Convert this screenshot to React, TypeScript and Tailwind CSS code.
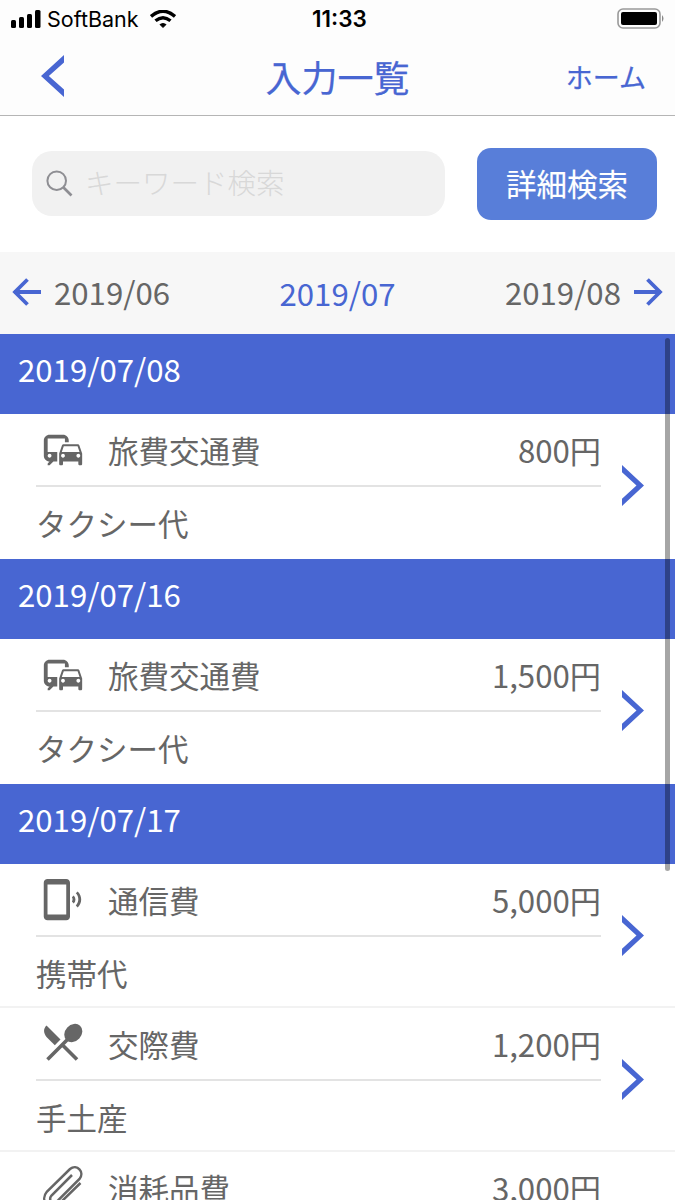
import React from 'react';
import { MdCommute, MdPhonelinkRing } from 'react-icons/md';

const jp = "font-['Noto_Sans_CJK_JP',sans-serif]";

function Paperclip() {
  return (
    <svg className="h-[45px] w-[45px]" viewBox="0 0 45 45" fill="none" stroke="currentColor" strokeWidth="2.5">
      <path d="M32 10L11.500 30.500C7.500 35.500 13 40 18 35.500L39.500 14C45 7 37 -1.500 30 4L7 26.500C-1 36 10 46 19 39L40.500 18" />
    </svg>
  );
}

function Cutlery() {
  return (
    <svg className="h-[45px] w-[45px]" viewBox="0 0 45 45" fill="currentColor">
      <path d="M6.500 4.500L20.500 18.500L14.800 24.200L6.500 16C3.500 12 3 8 6.500 4.500Z" />
      <ellipse cx="33.300" cy="12" rx="8.200" ry="9.900" transform="rotate(43 33.3 12)" />
      <path d="M29 17L7.500 38.500M21.500 23L37 38.500" stroke="currentColor" strokeWidth="3.600" />
    </svg>
  );
}

function Chevron({ className, flip }: { className: string; flip?: boolean }) {
  return (
    <svg className={className} viewBox="0 0 22 42" preserveAspectRatio="none" fill="#4866d2">
      <path d={flip ? 'M22 0V7.500L7.500 21L22 34.500V42L0 21Z' : 'M0 0V7.500L14.500 21L0 34.500V42L22 21Z'} />
    </svg>
  );
}

function Arrow({ right }: { right?: boolean }) {
  return (
    <svg className="h-[28px] w-[29px] shrink-0" viewBox="0 0 29 28" fill="none" stroke="#4866d2" strokeWidth="3.8">
      <path d={right ? 'M0 14H27M13.500 1.500L26 14L13.500 26.500' : 'M29 14H2M15.500 1.500L3 14L15.500 26.500'} />
    </svg>
  );
}

function DateHeader({ date }: { date: string }) {
  return (
    <div className="h-[80px] shrink-0 bg-[#4866d2] pl-[18px] pt-3 text-[31.2px] leading-[46px] text-white">
      {date}
    </div>
  );
}

type Item = { icon: React.ReactNode; name: string; price: string; memo: string };

function Row({ icon, name, price, memo, last }: Item & { last?: boolean }) {
  return (
    <div className={last ? 'flex h-[145px] shrink-0 pl-9' : 'flex h-[144px] shrink-0 border-b-2 border-[#f2f2f2] pl-9'}>
      <div className="w-[565px]">
        <div className="flex h-[73px] items-center border-b-2 border-[#e3e3e3]">
          <div className="ml-1 w-[45px]">{icon}</div>
          <div className="ml-[23px] flex-1 text-[30.5px] leading-[46px]">{name}</div>
          <div className="text-[31.2px] leading-[46px]">{price}</div>
        </div>
        <div className="pt-[13px] text-[30.5px] leading-[46px]">{memo}</div>
      </div>
      <Chevron className="ml-[21px] mt-[51px] h-[41px] w-[22px]" />
    </div>
  );
}

const commute = <MdCommute size={46} />;

export default function App() {
  return (
    <div className={`relative flex h-[1200px] w-[675px] flex-col overflow-hidden bg-white text-[#666] ${jp}`}>
      <div className="grid h-[37px] shrink-0 grid-cols-3 items-center bg-[#fdfdfd] px-[10px] font-['Inter',sans-serif] text-[22px] text-black">
        <div className="flex items-center">
          <svg className="h-[18px] w-[31px]" viewBox="0 0 31 18">
            <rect x="1" y="10" width="5" height="8" rx="1.500" />
            <rect x="9" y="7" width="5" height="11" rx="1.500" />
            <rect x="17" y="4" width="5" height="14" rx="1.500" />
            <rect x="25" y="0" width="5.500" height="18" rx="1.500" />
          </svg>
          <span className="ml-[6px] text-[21.5px] leading-[30px]">SoftBank</span>
          <svg className="ml-[11px] h-[18px] w-[26px]" viewBox="0 0 26 18">
            <path d="M10 14.500Q13 12.500 16 14.500L13 17.500Z" stroke="#000" strokeWidth="1" />
            <path d="M1 6.500Q13 -4 25 6.500M5.500 10.800Q13 4.500 20.500 10.800" fill="none" stroke="#000" strokeWidth="3.400" />
          </svg>
        </div>
        <div className="pl-1 text-center text-[22.5px] font-semibold">11:33</div>
        <div className="-mr-px flex justify-end">
          <svg className="h-[21px] w-[49px]" viewBox="0 0 49 21">
            <rect x="1" y="1" width="42" height="19" rx="5" fill="none" stroke="#999" strokeWidth="1.600" />
            <rect x="4" y="4" width="36" height="13" rx="2" />
            <path d="M45 7Q48 10.500 45 14Z" fill="#888" />
          </svg>
        </div>
      </div>
      <div className="grid h-[79px] shrink-0 grid-cols-3 items-center border-b border-[#b5b5b5] bg-[#fdfdfd] pb-px text-[#4866d2] [-webkit-text-stroke:0.25px]">
        <Chevron flip className="ml-[41px] h-[42px] w-[23px]" />
        <div className="whitespace-nowrap text-center text-[36px] leading-[50px]">入力一覧</div>
        <div className="pr-[29px] pt-[2px] text-right text-[27px] leading-[40px]">ホーム</div>
      </div>
      <div className="flex h-[136px] shrink-0 items-center pl-8 pr-[18px]">
        <div className="-mt-px flex h-[65px] w-[413px] items-center rounded-[20px] bg-[#f1f1f1] pl-[14px]">
          <svg className="h-[27px] w-[27px]" viewBox="0 0 27 27" fill="none" stroke="#8e8e93">
            <circle cx="10.700" cy="10.700" r="9.300" strokeWidth="2" />
            <path d="M17.500 17.500L25.500 25.500" strokeWidth="2.700" />
          </svg>
          <span className="-mt-1 ml-[12px] text-[28.5px] font-light leading-[42px] text-[#d8d8d8]">キーワード検索</span>
        </div>
        <button className="ml-8 h-[72px] w-[180px] rounded-[14px] bg-[#587ed9] text-[30.5px] text-white [-webkit-text-stroke:0.15px]">詳細検索</button>
      </div>
      <div className="grid h-[82px] shrink-0 grid-cols-3 items-center bg-[#f7f7f7] px-[12px] text-[31.2px] leading-[46px]">
        <div className="-mt-[2px] flex items-center gap-[13px]"><Arrow />2019/06</div>
        <div className="text-center text-[#4866d2]">2019/07</div>
        <div className="-mt-[2px] flex items-center justify-end gap-[13px]">2019/08<Arrow right /></div>
      </div>
      <DateHeader date="2019/07/08" />
      <Row last icon={commute} name="旅費交通費" price="800円" memo="タクシー代" />
      <DateHeader date="2019/07/16" />
      <Row last icon={commute} name="旅費交通費" price="1,500円" memo="タクシー代" />
      <DateHeader date="2019/07/17" />
      <Row icon={<MdPhonelinkRing size={45} />} name="通信費" price="5,000円" memo="携帯代" />
      <Row icon={<Cutlery />} name="交際費" price="1,200円" memo="手土産" />
      <Row icon={<Paperclip />} name="消耗品費" price="3,000円" memo="" />
      <div className="absolute left-[665px] top-[338px] h-[533px] w-[5px] rounded-full bg-black/35" />
    </div>
  );
}
